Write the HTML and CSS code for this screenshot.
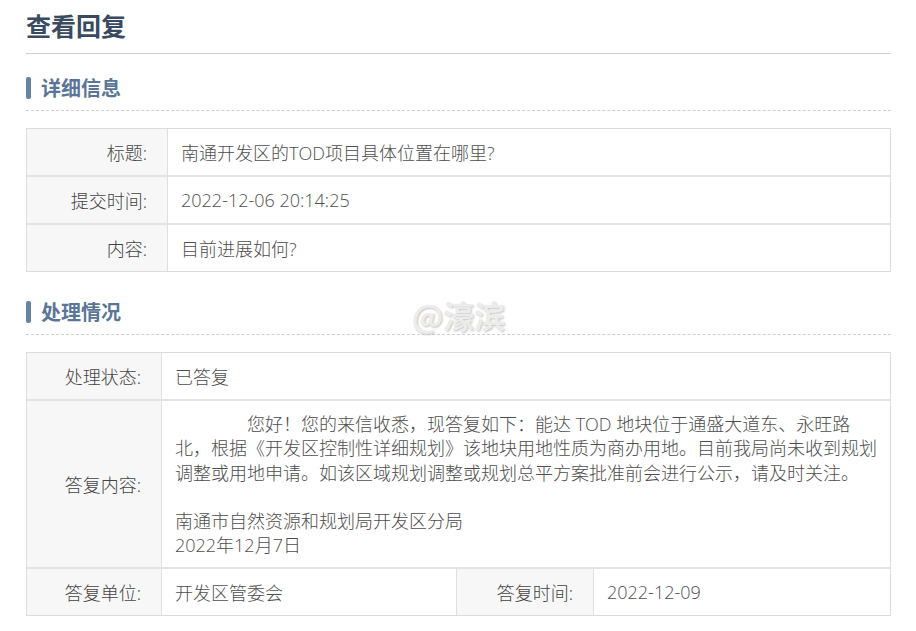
FILE: index.html
```html
<!DOCTYPE html>
<html lang="zh-CN">
<head>
<meta charset="utf-8">
<title>查看回复</title>
<link rel="stylesheet" href="styles.css">
</head>
<body>
<div class="page">
  <h1 class="page-title">查看回复</h1>

  <h2 class="section-title"><span class="bar"></span>详细信息</h2>
  <div class="info-table">
    <div class="row">
      <div class="label">标题:</div>
      <div class="value">南通开发区的TOD项目具体位置在哪里?</div>
    </div>
    <div class="row">
      <div class="label">提交时间:</div>
      <div class="value">2022-12-06 20:14:25</div>
    </div>
    <div class="row last">
      <div class="label">内容:</div>
      <div class="value">目前进展如何?</div>
    </div>
  </div>

  <h2 class="section-title second"><span class="bar"></span>处理情况</h2>
  <div class="reply-table">
    <div class="label">处理状态:</div>
    <div class="value span3">已答复</div>
    <div class="label">答复内容:</div>
    <div class="value span3 reply">
      <p class="indent">您好！您的来信收悉，现答复如下：能达 TOD 地块位于通盛大道东、永旺路<br>北，根据《开发区控制性详细规划》该地块用地性质为商办用地。目前我局尚未收到规划<br>调整或用地申请。如该区域规划调整或规划总平方案批准前会进行公示，请及时关注。</p>
      <p class="sign">南通市自然资源和规划局开发区分局<br>2022年12月7日</p>
    </div>
    <div class="label last">答复单位:</div>
    <div class="value last">开发区管委会</div>
    <div class="label last">答复时间:</div>
    <div class="value last">2022-12-09</div>
  </div>

  <div class="watermark">@濠滨</div>
</div>
</body>
</html>
```

FILE: styles.css
```css
* { box-sizing: border-box; }
html, body { margin: 0; padding: 0; background: #fff; }
body {
  font-family: "Noto Sans CJK SC", "Microsoft YaHei", sans-serif;
  color: #555;
}
.page {
  position: relative;
  width: 891px;
  padding: 7px 0 0 26px;
}
.page-title {
  margin: 0;
  font-size: 25px;
  line-height: 36px;
  font-weight: 700;
  color: #3a4a60;
  padding-bottom: 10px;
  border-bottom: 1px solid #cfcfcf;
}
.section-title {
  margin: 19px 0 0;
  display: flex;
  align-items: center;
  gap: 10px;
  font-size: 20px;
  line-height: 30px;
  font-weight: 700;
  color: #5a7597;
  padding-bottom: 7px;
  border-bottom: 1px dashed #cfcfcf;
}
.section-title.second { margin-top: 25px; }
.bar {
  display: block;
  width: 5px;
  height: 22px;
  border-radius: 2px;
  background: #6682a6;
}
.info-table, .reply-table {
  margin-top: 17px;
  border: 1px solid #dcdcdc;
  font-family: "Open Sans", "Noto Sans CJK SC", sans-serif;
  font-size: 18px;
  font-weight: 300;
}
.row {
  display: grid;
  grid-template-columns: 141px 1fr;
  height: 48px;
  border-bottom: 2px solid #e3e3e3;
}
.row.last { border-bottom: 0; height: 46px; }
.label {
  background: #f7f7f7;
  color: #444;
  text-align: right;
  padding-right: 20px;
  display: flex;
  align-items: center;
  justify-content: flex-end;
  border-right: 1px solid #e0e0e0;
}
.value {
  display: flex;
  align-items: center;
  padding-left: 13px;
  color: #4e4e4e;
}
.reply-table {
  display: grid;
  grid-template-columns: 135px 295px 137px 1fr;
  grid-auto-rows: auto;
}
.reply-table .label, .reply-table .value {
  border-bottom: 2px solid #e3e3e3;
  min-height: 48px;
}
.reply-table .last { border-bottom: 0; min-height: 46px; }
.reply-table .value.last:nth-last-child(3) { border-right: 1px solid #e0e0e0; }
.span3 { grid-column: span 3; }
.reply {
  display: block;
  padding: 11px 10px 9px 13px;
  line-height: 24.3px;
}
.reply p { margin: 0; white-space: nowrap; }
.reply .indent { text-indent: 72px; }
.reply .sign { margin-top: 24.3px; }
.watermark {
  position: absolute;
  left: 412px;
  top: 292px;
  font-size: 31px;
  font-weight: 700;
  color: #ececec;
  text-shadow: 1px 1px 2px #c4c4c4;
  letter-spacing: 0;
}
```
